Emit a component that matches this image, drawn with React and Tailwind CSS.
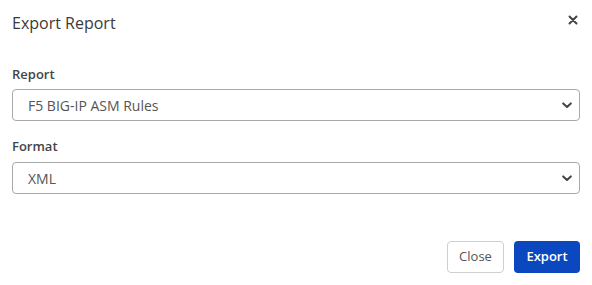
import React from "react";

function Chevron() {
  return (
    <svg width="10" height="7" viewBox="0 0 10 7" className="text-[#444]">
      <path d="M1.2 1.4 L5 5 L8.8 1.4" fill="none" stroke="currentColor" strokeWidth="2" strokeLinecap="round" strokeLinejoin="round" />
    </svg>
  );
}

function SelectBox({ value }) {
  return (
    <div className="h-[32px] w-full border border-[#a8a8a8] rounded-[4px] bg-white flex items-center justify-between pl-[15px] pr-[7px]">
      <span className="text-[14px] text-[#555]">{value}</span>
      <Chevron />
    </div>
  );
}

export default function App() {
  return (
    <div className="w-[592px] h-[285px] bg-white" style={{ fontFamily: '"Open Sans", sans-serif' }}>
      <div className="flex items-center justify-between pl-[12px] pr-[14px] h-[46px]">
        <h1 className="text-[16px] text-[#3a3a3a] leading-none">Export Report</h1>
        <svg width="10" height="10" viewBox="0 0 10 10" className="text-[#444] mb-[6px]">
          <path d="M1.5 1.5 L8.5 8.5 M8.5 1.5 L1.5 8.5" stroke="currentColor" strokeWidth="2" strokeLinecap="round" />
        </svg>
      </div>
      <div className="px-[12px] pt-[22px] flex flex-col">
        <label className="text-[13px] font-semibold text-[#444] leading-none mb-[8px]">Report</label>
        <SelectBox value="F5 BIG-IP ASM Rules" />
        <label className="text-[13px] font-semibold text-[#444] leading-none mt-[19px] mb-[9px]">Format</label>
        <SelectBox value="XML" />
      </div>
      <div className="flex justify-end gap-[10px] px-[12px] pt-[47px]">
        <button className="h-[32px] w-[57px] border border-[#cfcfcf] rounded-[4px] bg-white text-[13px] text-[#555]">Close</button>
        <button className="h-[32px] w-[66px] rounded-[4px] bg-[#0b47bf] text-[13px] font-semibold text-white">Export</button>
      </div>
    </div>
  );
}
